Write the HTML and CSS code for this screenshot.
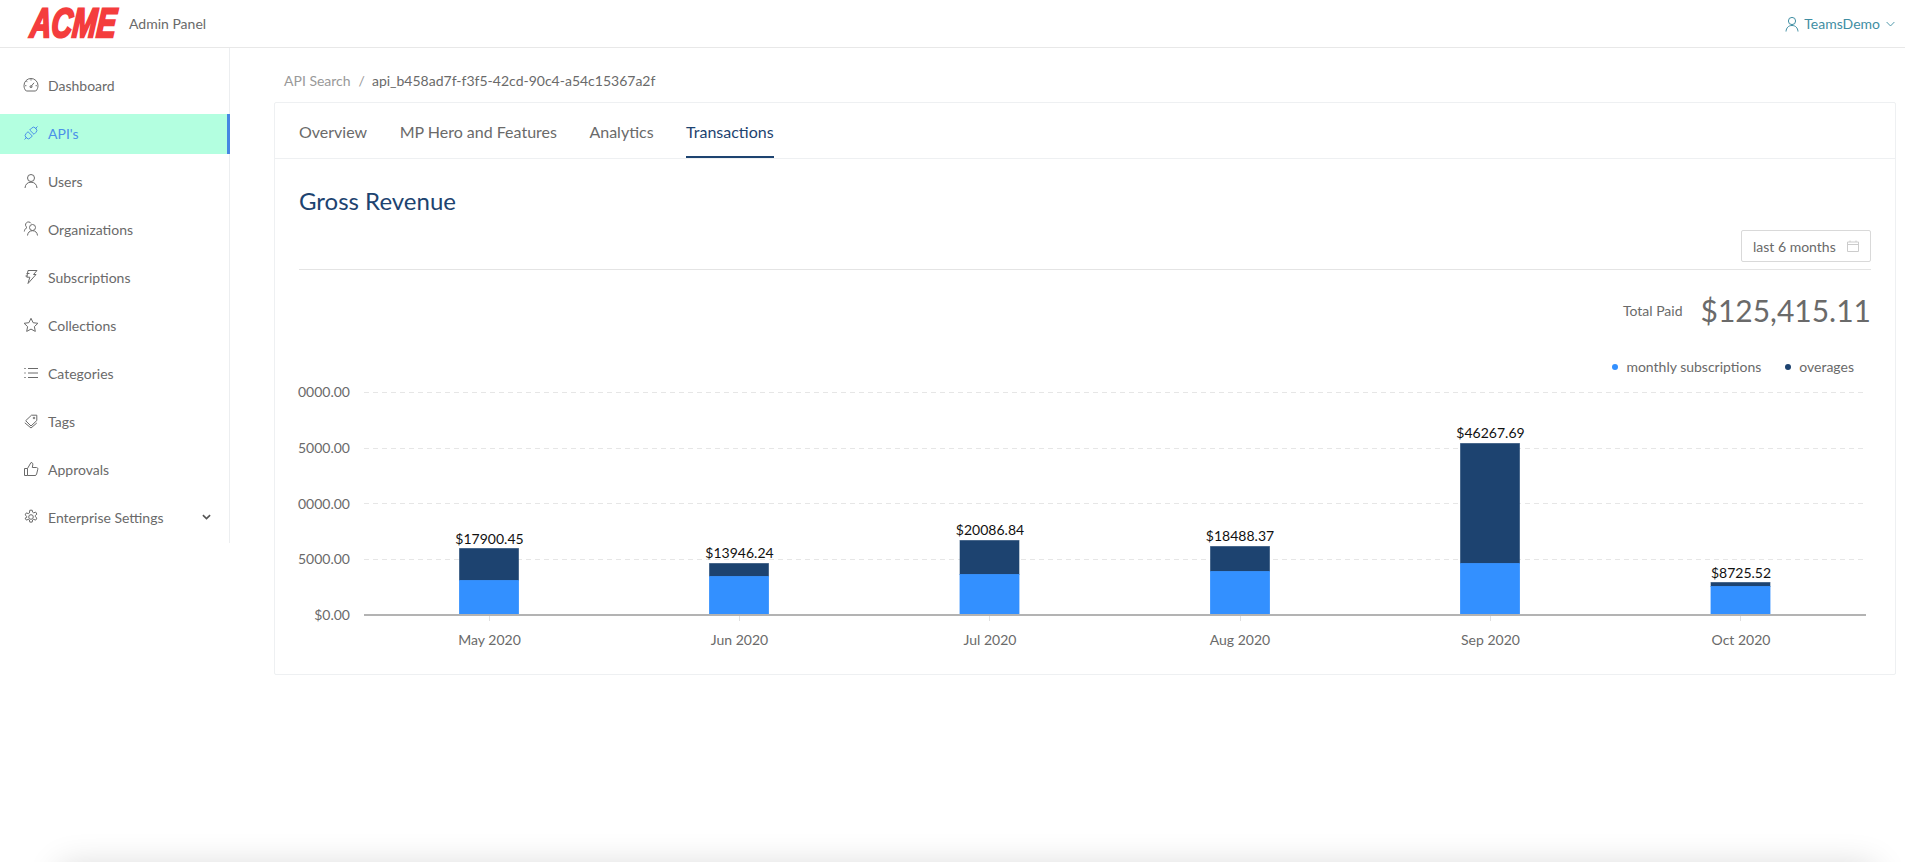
FILE: index.html
```html
<!DOCTYPE html>
<html lang="en">
<head>
<meta charset="utf-8">
<title>Admin Panel</title>
<link rel="stylesheet" href="styles.css">
</head>
<body>
<header class="topbar">
  <div class="brand">
    <span class="logo"><span class="logo-text">ACME</span></span>
    <span class="brand-name">Admin Panel</span>
  </div>
  <div class="account">
    <svg class="icon" viewBox="1 0 14 16"><circle cx="8" cy="5" r="3.600"/><path d="M2 15.500c.3-3.800 2.600-6 6-6s5.700 2.200 6 6"/></svg>
    <span>TeamsDemo</span>
    <svg class="caret" viewBox="0 0 10 6"><path d="M.7.8 5 5.200 9.300.8"/></svg>
  </div>
</header>
<div class="app">
  <nav class="sidebar">
    <a class="nav-item"><svg class="icon" viewBox="0 0 16 16"><path d="M3.300 14C1.800 12.800 1 10.900 1 8.500a7 7 0 0 1 14 0c0 2.400-.8 4.300-2.300 5.500z"/><path d="M8 9.500 11 5.800"/><circle cx="8" cy="9.700" r="1"/><path d="M8 2.200v1.300M3.500 4.200l.9.900M2.100 8.700h1.300M12.600 8.700h1.300"/></svg><span>Dashboard</span></a>
    <a class="nav-item active"><svg class="icon" viewBox="0 0 16 16"><path d="M1.500 14.500 4 12M14.500 1.500 12 4"/><path d="M5 6.700 9.300 11l-2 2a2.700 2.700 0 0 1-3.800 0l-.5-.5a2.700 2.700 0 0 1 0-3.800z"/><path d="M6.700 5l2-2a2.700 2.700 0 0 1 3.800 0l.5.500a2.700 2.700 0 0 1 0 3.800l-2 2z"/></svg><span>API's</span></a>
    <a class="nav-item"><svg class="icon" viewBox="0 0 16 16"><circle cx="8" cy="5" r="3.500"/><path d="M2 15c.3-3.800 2.600-5.800 6-5.800s5.700 2 6 5.800"/></svg><span>Users</span></a>
    <a class="nav-item"><svg class="icon" viewBox="0 0 16 16"><circle cx="9.500" cy="6.500" r="3"/><path d="M4.500 14.500c.3-3 2.100-4.800 5-4.800s4.700 1.800 5 4.800"/><path d="M8 2.300A3 3 0 0 0 3.500 1.700 3 3 0 0 0 4 6.500C2.500 7.300 1.500 8.700 1.300 10.500"/></svg><span>Organizations</span></a>
    <a class="nav-item"><svg class="icon" viewBox="0 0 16 16"><path d="M5 1.500h9L10.500 5.500H13L5 14.500l1.800-6.300H3.800z"/><path d="M3.500 4.500h3M2.500 7h2"/></svg><span>Subscriptions</span></a>
    <a class="nav-item"><svg class="icon" viewBox="0 0 16 16"><path d="m8 1.300 2.100 4.400 4.800.6-3.500 3.300.9 4.800L8 12.100l-4.300 2.300.9-4.800L1.100 6.300l4.800-.6z"/></svg><span>Collections</span></a>
    <a class="nav-item"><svg class="icon" viewBox="0 0 16 16"><path d="M5 3.500h10M5 8h10M5 12.500h10"/><path d="M1.300 3.500h1.400M1.300 8h1.400M1.300 12.500h1.400"/></svg><span>Categories</span></a>
    <a class="nav-item"><svg class="icon" viewBox="0 0 16 16"><path d="M8.500 2.200h5.300v5.300L8 13 2.700 7.700z"/><path d="M1.800 9.800 8 15l5.800-5"/><circle cx="11" cy="5" r=".8"/></svg><span>Tags</span></a>
    <a class="nav-item"><svg class="icon" viewBox="0 0 16 16"><path d="M4.500 14.500V7.500H1.500v7zM4.500 7.500 8 1.500c1.500 0 2 1.100 1.800 2.300L9.300 6.500h4.200c1 0 1.500.8 1.300 1.700l-1.200 5c-.2.800-.8 1.300-1.600 1.300H4.500"/></svg><span>Approvals</span></a>
    <a class="nav-item"><svg class="icon" viewBox="0 0 16 16"><circle cx="8" cy="8" r="2.300"/><path d="M6.800 1.200h2.400l.4 2 1.100.6 2-.7 1.200 2-1.600 1.400v1.200l1.600 1.400-1.200 2-2-.7-1.100.6-.4 2.100H6.800l-.4-2.100-1.100-.6-2 .7-1.200-2L3.700 8.500V7.300L2.100 5.900l1.200-2 2 .7 1.100-.6z"/></svg><span>Enterprise Settings</span><svg class="nav-caret" viewBox="0 0 10 6"><path d="M1 1l4 3.800L9 1"/></svg></a>
  </nav>
  <main class="content">
    <div class="breadcrumb"><span class="crumb-root">API Search</span><span class="crumb-sep">/</span><span>api_b458ad7f-f3f5-42cd-90c4-a54c15367a2f</span></div>
    <section class="card">
      <div class="tabs">
        <a class="tab">Overview</a>
        <a class="tab">MP Hero and Features</a>
        <a class="tab">Analytics</a>
        <a class="tab selected">Transactions</a>
      </div>
      <div class="card-body">
        <h1 class="title">Gross Revenue</h1>
        <div class="filter-row">
          <div class="date-picker"><span>last 6 months</span>
            <svg class="cal" viewBox="0 0 12 12"><path d="M.5 2h11v9.500H.5zM.5 4.500h11M3 .5V2M9 .5V2"/></svg>
          </div>
        </div>
        <div class="total"><span class="total-label">Total Paid</span><span class="total-value">$125,415.11</span></div>
        <div class="legend">
          <span class="legend-item"><i class="dot dot-light"></i>monthly subscriptions</span>
          <span class="legend-item"><i class="dot dot-dark"></i>overages</span>
        </div>
        <svg class="chart" viewBox="299 380 1572 280" width="1572" height="280">
          <g class="grid">
            <path d="M364 392.500H1866M364 448.500H1866M364 503.500H1866M364 559.500H1866"/>
          </g>
          <g class="ylabels">
            <text x="350" y="397">0000.00</text>
            <text x="350" y="453">5000.00</text>
            <text x="350" y="509">0000.00</text>
            <text x="350" y="564">5000.00</text>
            <text x="350" y="620">$0.00</text>
          </g>
          <g class="ticks"><path d="M489.500 616v5M739.500 616v5M989.500 616v5M1240.500 616v5M1490.500 616v5M1740.500 616v5"/></g>
          <g class="bars">
            <rect class="b-dark" x="459.500" y="548.500" width="59" height="32"/><rect class="b-light" x="459.500" y="580.500" width="59" height="35"/>
            <rect class="b-dark" x="709.500" y="563.500" width="59" height="13"/><rect class="b-light" x="709.500" y="576.500" width="59" height="39"/>
            <rect class="b-dark" x="960" y="540.500" width="59" height="34"/><rect class="b-light" x="960" y="574.500" width="59" height="41"/>
            <rect class="b-dark" x="1210.500" y="546.500" width="59" height="25"/><rect class="b-light" x="1210.500" y="571.500" width="59" height="44"/>
            <rect class="b-dark" x="1460.500" y="443.500" width="59" height="120"/><rect class="b-light" x="1460.500" y="563.500" width="59" height="52"/>
            <rect class="b-dark" x="1711" y="582.500" width="59" height="4"/><rect class="b-light" x="1711" y="586.500" width="59" height="29"/>
          </g>
          <path class="axis" d="M364 615H1866"/>
          <g class="values">
            <text x="489.500" y="544">$17900.45</text>
            <text x="739.500" y="558">$13946.24</text>
            <text x="990" y="535">$20086.84</text>
            <text x="1240" y="541">$18488.37</text>
            <text x="1490.500" y="438">$46267.69</text>
            <text x="1741" y="578">$8725.52</text>
          </g>
          <g class="xlabels">
            <text x="489.500" y="645">May 2020</text>
            <text x="739.500" y="645">Jun 2020</text>
            <text x="990" y="645">Jul 2020</text>
            <text x="1240" y="645">Aug 2020</text>
            <text x="1490.500" y="645">Sep 2020</text>
            <text x="1741" y="645">Oct 2020</text>
          </g>
        </svg>
      </div>
    </section>
  </main>
</div>
<div class="bottom-panel"></div>
</body>
</html>
```
FILE: styles.css
```css
* { box-sizing: border-box; }
html, body { height: 100%; }
body {
  margin: 0;
  overflow: hidden;
  background: #fff;
  color: #6a6a6a;
  font-family: Lato, "Open Sans", sans-serif;
  font-size: 14px;
}
.icon {
  width: 16px;
  height: 16px;
  flex: none;
  fill: none;
  stroke: currentColor;
  stroke-width: 1;
}
.topbar {
  height: 48px;
  border-bottom: 1px solid #e8e8e8;
  display: flex;
  align-items: center;
  justify-content: space-between;
  padding: 0 10px 0 26px;
}
.brand { display: flex; align-items: center; gap: 11px; }
.logo { display: block; width: 92px; height: 32px; }
.logo-text {
  display: block;
  transform-origin: left top;
  transform: translate(6px, -1px) scale(.71, 1) skewX(-7deg);
  font-family: "Liberation Sans", Arial, sans-serif;
  font-weight: 700;
  font-style: italic;
  font-size: 41px;
  line-height: 32px;
  color: #f43d3d;
  -webkit-text-stroke: 2.4px #f43d3d;
}
.brand-name { font-size: 14px; }
.account { display: flex; align-items: center; color: #3f8ea3; font-size: 14px; gap: 5px; }
.account .icon { width: 14px; }
.account .caret { margin-left: 1px; }
.caret { width: 9px; height: 6px; fill: none; stroke: currentColor; stroke-width: 1; }
.app { display: flex; align-items: flex-start; }
.sidebar {
  width: 230px;
  flex: none;
  border-right: 1px solid #eceef0;
  padding: 18px 0 5px;
  display: flex;
  flex-direction: column;
  gap: 8px;
}
.nav-item {
  height: 40px;
  display: flex;
  align-items: center;
  gap: 9px;
  padding: 0 18px 2px 23px;
}
.nav-item.active {
  background: #b3ffe0;
  color: #4a90e8;
  border-right: 3px solid #4687e2;
  margin-right: -1px;
}
.nav-caret {
  width: 9px;
  height: 6px;
  margin-left: auto;
  fill: none;
  stroke: #555;
  stroke-width: 1.8;
}
.content { flex: 1; min-width: 0; padding: 23px 9px 0 44px; }
.breadcrumb {
  height: 20px;
  line-height: 20px;
  padding-left: 10px;
  margin-bottom: 11px;
  display: flex;
}
.crumb-root { color: #999; }
.crumb-sep { color: #999; margin: 0 7px 0 8px; }
.card {
  height: 573px;
  border: 1px solid #eef0f2;
  border-radius: 2px;
}
.tabs {
  height: 56px;
  border-bottom: 1px solid #eef0f2;
  display: flex;
  gap: 32.500px;
  padding: 0 24px;
}
.tab {
  font-size: 16px;
  padding-top: 3px;
  line-height: 52px;
  height: 55px;
}
.tab.selected { color: #1d4370; border-bottom: 2px solid #1d4370; }
.card-body { padding: 0 24px; }
.title {
  margin: 26px 0 0;
  font-size: 24px;
  line-height: 32px;
  font-weight: 400;
  color: #1d4370;
}
.filter-row {
  margin-top: 13px;
  padding-bottom: 7px;
  border-bottom: 1px solid #e4e4e4;
  display: flex;
  justify-content: flex-end;
}
.date-picker {
  width: 130px;
  height: 32px;
  border: 1px solid #d9d9d9;
  border-radius: 2px;
  display: flex;
  align-items: center;
  justify-content: space-between;
  padding: 0 11px;
}
.cal { width: 12px; height: 12px; fill: none; stroke: #ccc; stroke-width: 1; }
.total {
  margin-top: 20px;
  height: 40px;
  display: flex;
  justify-content: flex-end;
  align-items: center;
  gap: 18px;
}
.total-value { font-size: 30px; line-height: 40px; }
.legend {
  margin-top: 27px;
  height: 20px;
  line-height: 20px;
  display: flex;
  justify-content: flex-end;
  gap: 24px;
  padding-right: 17px;
}
.legend-item { display: flex; align-items: center; gap: 8px; }
.dot { width: 6px; height: 6px; border-radius: 50%; }
.dot-light { background: #3390ff; }
.dot-dark { background: #1d4370; }
.chart { display: block; margin-top: 3px; overflow: visible; font-family: Lato, sans-serif; font-size: 14px; }
.grid path { fill: none; stroke: #e6e6e6; stroke-width: 1; stroke-dasharray: 5 4; }
.ylabels text { text-anchor: end; fill: #6a6a6a; }
.xlabels text { text-anchor: middle; fill: #6a6a6a; }
.values text { text-anchor: middle; fill: #111; }
.ticks path { fill: none; stroke: #e0e0e0; stroke-width: 1; }
.axis { fill: none; stroke: #b3b3b3; stroke-width: 2; }
.b-dark { fill: #1d4370; stroke: #1d4370; stroke-opacity: .6; stroke-width: 1; }
.b-light { fill: #3390ff; stroke: #3390ff; stroke-opacity: .8; stroke-width: 1; }
.bottom-panel {
  position: fixed;
  left: 60px;
  right: 30px;
  top: 866px;
  height: 40px;
  background: #fff;
  box-shadow: 0 0 34px rgba(0, 0, 0, .16);
}
```
